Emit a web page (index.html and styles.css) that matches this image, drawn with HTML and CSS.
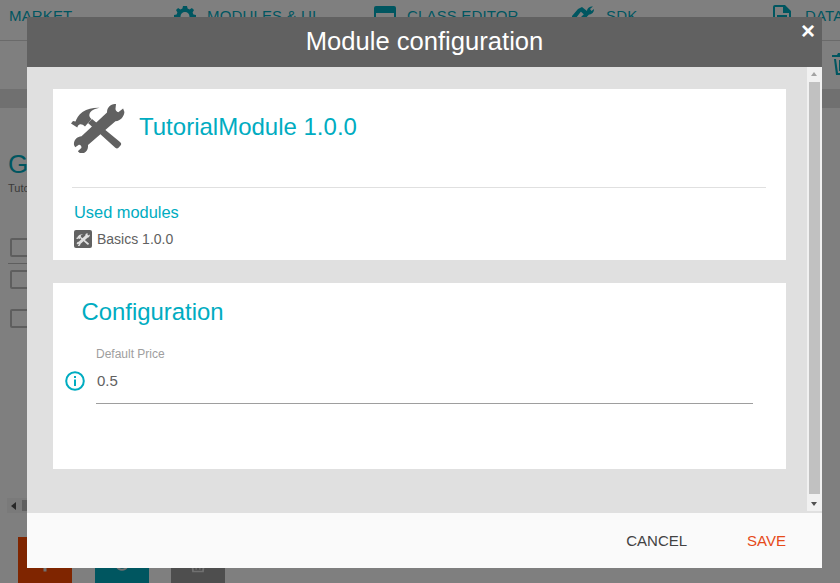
FILE: index.html
```html
<!DOCTYPE html>
<html lang="en">
<head>
<meta charset="utf-8">
<title>Module configuration</title>
<link rel="stylesheet" href="styles.css">
</head>
<body>
<div class="page">
  <nav class="nav">
    <span class="nav-item">MARKET</span>
    <span class="nav-item"><svg class="nav-icon" viewBox="0 0 24 24"><path d="M12 2l2 0 .6 2.6 2 .8 2.300-1.400 2.100 2.100-1.400 2.300.8 2 2.600.6v3l-2.600.6-.8 2 1.400 2.300-2.100 2.100-2.300-1.400-2 .8-.6 2.600h-3l-.6-2.600-2-.8-2.300 1.400-2.100-2.100 1.400-2.300-.8-2L1 14v-3l2.600-.6.8-2L3 6.100l2.100-2.100 2.300 1.400 2-.8L10 2zM12 8a4.500 4.500 0 1 0 0 9 4.500 4.500 0 0 0 0-9z"/></svg>MODULES &amp; UI</span>
    <span class="nav-item"><svg class="nav-icon" viewBox="0 0 24 24"><path d="M3 2h18a2 2 0 0 1 2 2v16a2 2 0 0 1-2 2H3a2 2 0 0 1-2-2V4a2 2 0 0 1 2-2zm0 7v11h18V9z"/></svg>CLASS EDITOR</span>
    <span class="nav-item"><svg class="nav-icon" viewBox="0 0 24 24"><path d="M0 12l6-7 3 2.500L4 14H0zM6 5l4-2 5 4-3 3.500zM8 14l7-7c.2-2.500 2-4.500 6-4.500L18 5l1.500 2 2.500-2c.2 3-2 5.500-5 5.500L11 17z"/></svg>SDK</span>
    <span class="nav-item"><svg class="nav-icon doc" viewBox="0 0 18 24"><path d="M2 1h10l6 6v15a2 2 0 0 1-2 2H2a2 2 0 0 1-2-2V3a2 2 0 0 1 2-2zm0 2v19h14V9h-6V3zM4 11h10v2H4zm0 4h10v2H4z" fill-rule="evenodd"/></svg>DATA</span>
  </nav>
  <div class="toolbar">
    <svg class="toolbar-trash" viewBox="0 0 24 24"><path d="M8 1h8l1 2h5v2H2V3h5zM4 7h2l2 14h8l2-14h2l-2 16H6zM9 8h2v11H9zM13 8h2v11h-2z"/></svg>
  </div>
  <div class="band"></div>
  <section class="content">
    <h1 class="page-title">Generic</h1>
    <p class="page-sub">TutorialModule</p>
    <div class="check-row"><span class="checkbox"></span></div>
    <div class="check-row second"><span class="checkbox"></span></div>
    <div class="check-row third"><span class="checkbox"></span></div>
  </section>
  <div class="hscroll"><span class="hscroll-arrow"></span><span class="hscroll-thumb"></span></div>
  <div class="actions">
    <span class="action red"><svg viewBox="0 0 24 24"><path d="M10 2h4v8h8v4h-8v8h-4v-8H2v-4h8z"/></svg></span>
    <span class="action teal"><svg viewBox="0 0 24 24"><path d="M12 21a9 9 0 0 1-8-5l2-1a7 7 0 0 0 12 0l2 1a9 9 0 0 1-8 5z"/></svg></span>
    <span class="action dark"><svg class="action-trash" viewBox="0 0 24 24"><path d="M4 12h2l1 8h10l1-8h2l-1 10H5zM9 12h1.500v7H9zM13.500 12H15v7h-1.500z"/></svg></span>
  </div>
</div>

<div class="overlay"></div>

<div class="modal" role="dialog">
  <header class="modal-head">
    <h2 class="modal-title">Module configuration</h2>
    <span class="modal-close">×</span>
  </header>
  <div class="modal-body">
    <div class="modal-scroll">
      <section class="card card-info">
        <div class="card-top">
          <svg class="tools-icon" viewBox="0 0 54 50">
            <use href="#tools"/>
          </svg>
          <h3 class="module-name">TutorialModule 1.0.0</h3>
        </div>
        <div class="used">
          <h4 class="used-title">Used modules</h4>
          <div class="used-item">
            <span class="used-badge"><svg viewBox="0 0 54 50"><use href="#tools-light"/></svg></span>
            <span>Basics 1.0.0</span>
          </div>
        </div>
      </section>
      <section class="card card-config">
        <h3 class="config-title">Configuration</h3>
        <div class="field">
          <svg class="info-icon" viewBox="0 0 22 22"><circle cx="11" cy="11" r="8.800" fill="none" stroke="#00acc1" stroke-width="2"/><rect x="10" y="9.500" width="2" height="6.500" fill="#00acc1"/><rect x="10" y="6" width="2" height="2" fill="#00acc1"/></svg>
          <div class="field-main">
            <label class="field-label">Default Price</label>
            <div class="field-value">0.5</div>
          </div>
        </div>
      </section>
    </div>
    <div class="vscroll">
      <span class="vscroll-up"></span>
      <span class="vscroll-thumb"></span>
      <span class="vscroll-down"></span>
    </div>
  </div>
  <footer class="modal-foot">
    <span class="btn-cancel">CANCEL</span>
    <span class="btn-save">SAVE</span>
  </footer>
</div>

<svg class="defs" width="0" height="0" aria-hidden="true">
  <defs>
    <g id="tools">
      <path d="M17 20l4-4 28 23c1.500 1.300 1.500 2.500.5 3.500l-2 2.300c-1 1-2 1-3.200 0z"/>
      <path d="M0 20.500l2-2.500 2.500 0.500c1-3 3-6.500 7-9.500 5-3.500 11-4.500 17-4.300-5 1-9 3-10 6.300-.7 2.200.5 3.500 2 5l-6.500 7.500c-2-1.600-3.500-2.500-5.500-2-1.200.3-1.800 1.500-2.200 3z"/>
      <path d="M45 1l-.5 4.800c-.2 1.600 1.200 3.200 2.800 3.400l4.800-3.600 1.300 3.400c-.4 4.600-3.600 8.800-9 9.300L17 42c.3 3.500-1 6.500-4 8l-4 .2-2.200-2 3.500-3.300c.6-1.500-.8-3.400-2.400-3.100l-3.700 2.500L3 42c-.5-4 2-7.500 6-8.500l1.500-.200L36 9.500C36 4 40 .3 45 1z"/>
    </g>
    <use id="tools-light" href="#tools" fill="#e0e0e0"/>
  </defs>
</svg>
</body>
</html>
```

FILE: styles.css
```css
* { box-sizing: border-box; }
html, body { margin: 0; padding: 0; width: 840px; height: 583px; overflow: hidden; }
body { background: #fff; font-family: "Liberation Sans", Arial, sans-serif; color: #616161; position: relative; }

.page { height: 583px; display: flex; flex-direction: column; overflow: hidden; }

.nav {
  height: 41px; flex: none; padding-left: 9px;
  display: grid; grid-template-columns: 164px 200px 199px 201px 1fr;
  border-bottom: 1px solid #d4d4d4;
  font-size: 15px; color: #00acc1;
  align-items: start;
}
.nav-item { display: flex; align-items: center; height: 31px; white-space: nowrap; letter-spacing: .15px; }
.nav-icon { width: 24px; height: 24px; fill: #00acc1; margin-right: 10px; flex: none; }
.nav-icon.doc { width: 18px; margin-right: 14px; }

.toolbar { height: 48px; flex: none; display: flex; justify-content: flex-end; align-items: center; overflow: hidden; }
.toolbar-trash { width: 24px; height: 24px; fill: #00acc1; margin-right: -16px; margin-top: -2px; flex: none; transform: translateX(-2px); }
.band { height: 19px; flex: none; background: #e0e0e0; }

.content { flex: 1; padding: 41px 8px 0 8px; }
.page-title { margin: 0; font-size: 26px; line-height: 30px; font-weight: 400; color: #00acc1; }
.page-sub { margin: 2px 0 0; font-size: 11px; line-height: 14px; color: #757575; }
.check-row { margin: 43px 0 0; padding: 0 0 6px 2px; width: 60px; border-bottom: 1px solid #bdbdbd; height: 26px; }
.check-row.second { margin-top: 6px; border: 0; }
.check-row.third { margin-top: 13px; border: 0; }
.checkbox { display: block; width: 19px; height: 19px; border: 2px solid #bdbdbd; border-radius: 2px; }

.hscroll { height: 15px; flex: none; margin: 0 0 24px 7px; width: 100px; background: #f5f5f5; display: flex; align-items: center; }
.hscroll-arrow { width: 0; height: 0; margin: 0 3px 0 4px; border: 4px solid transparent; border-left: 0; border-right: 5px solid #505050; }
.hscroll-thumb { width: 40px; height: 11px; margin-left: 3px; background: #c1c1c1; }

.actions { height: 46px; flex: none; display: flex; gap: 23px; padding-left: 18px; }
.action { width: 54px; height: 54px; flex: none; display: flex; align-items: center; justify-content: center; }
.action svg { width: 18px; height: 18px; fill: #e0e0e0; }
.action svg.action-trash { width: 20px; height: 20px; }
.action.red { background: #ff4a00; }
.action.teal { background: #00acc1; margin-right: -1px; }
.action.dark { background: #9c9c9c; }

.overlay { position: absolute; inset: 0; background: rgba(0, 0, 0, .5); }

.modal {
  position: absolute; left: 27px; top: 17px; width: 795px; height: 551px;
  display: flex; flex-direction: column; background: #e0e0e0;
}
.modal-head {
  height: 50px; flex: none; background: #616161; color: #fff;
  display: flex; align-items: center; justify-content: center; position: relative;
}
.modal-title { margin: 0 0 2px; font-size: 25.6px; font-weight: 400; line-height: 48px; }
.modal-close { position: absolute; right: 5px; top: 0; font-size: 24px; line-height: 28px; width: 18px; text-align: center; font-weight: 700; }

.modal-body { flex: 1; min-height: 0; display: flex; }
.modal-scroll { flex: 1; min-width: 0; padding: 22px 21px 0 26px; display: flex; flex-direction: column; gap: 23px; }

.card { background: #fff; }
.card-info { height: 171px; padding: 14px 20px 0 19px; }
.card-top { height: 85px; display: flex; align-items: flex-start; gap: 14px; border-bottom: 1px solid #e0e0e0; }
.tools-icon { width: 54px; height: 50px; fill: #616161; flex: none; margin-left: -1px; }
.module-name { margin: 9px 0 0; font-size: 24px; font-weight: 400; line-height: 30px; color: #00acc1; }
.used { padding-top: 15px; }
.used-title { margin: 0 0 0 2px; font-size: 16.4px; font-weight: 400; line-height: 19px; color: #00acc1; }
.used-item { display: flex; align-items: center; gap: 5px; margin: 7px 0 0 2px; font-size: 14px; line-height: 20px; color: #616161; }
.used-badge { width: 18px; height: 18px; background: #616161; border-radius: 2px; display: flex; align-items: center; justify-content: center; }
.used-badge svg { width: 14px; height: 13px; }

.card-config { height: 186px; padding: 14px 33px 0 11px; }
.config-title { margin: 0 0 0 17.500px; font-size: 23.9px; font-weight: 400; line-height: 30px; color: #00acc1; }
.field { display: flex; align-items: flex-end; margin-top: 20px; }
.info-icon { width: 22px; height: 22px; flex: none; margin-bottom: 12px; }
.field-main { flex: 1; margin-left: 10px; border-bottom: 1px solid #9e9e9e; }
.field-label { display: block; font-size: 12px; line-height: 14px; color: #9e9e9e; }
.field-value { font-size: 15px; line-height: 20px; padding: 10px 0 12px 1px; color: #616161; }

.vscroll { width: 15px; flex: none; background: #f1f1f1; display: flex; flex-direction: column; align-items: center; margin-bottom: 2px; }
.vscroll-up { height: 15px; flex: none; width: 15px; position: relative; }
.vscroll-up::after { content: ""; position: absolute; left: 4px; top: 5px; border: 3.500px solid transparent; border-top: 0; border-bottom: 4px solid #a3a3a3; }
.vscroll-thumb { width: 11px; flex: 1; background: #c1c1c1; }
.vscroll-down { height: 17px; flex: none; width: 15px; position: relative; }
.vscroll-down::after { content: ""; position: absolute; left: 4px; top: 8px; border: 3.500px solid transparent; border-bottom: 0; border-top: 4px solid #505050; }

.modal-foot {
  height: 55px; flex: none; background: #fafafa;
  display: flex; justify-content: flex-end; align-items: center; gap: 60px; padding: 0 36px 0 0;
  font-size: 15px;
}
.btn-cancel { color: #424242; }
.btn-save { color: #e64a19; }

.defs { position: absolute; }
```
